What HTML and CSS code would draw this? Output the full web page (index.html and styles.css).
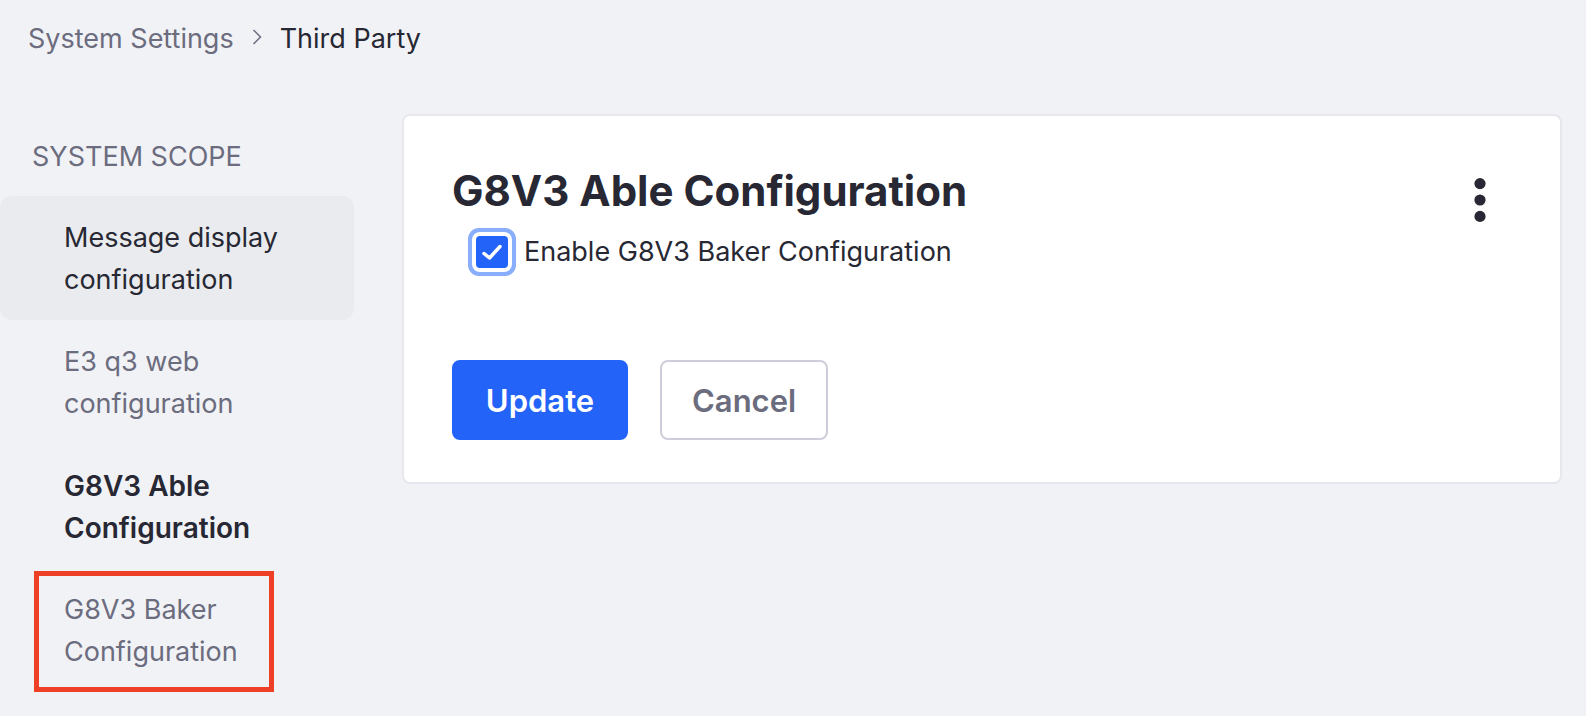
FILE: index.html
```html
<!DOCTYPE html>
<html lang="en">
<head>
<meta charset="utf-8">
<meta name="viewport" content="width=device-width, initial-scale=1">
<title>Third Party - System Settings</title>
<link rel="stylesheet" href="styles.css">
</head>
<body>
<nav class="breadcrumb" aria-label="Breadcrumb">
  <a class="breadcrumb-link" href="#">System Settings</a>
  <svg class="breadcrumb-divider" viewBox="0 0 10 16" aria-hidden="true"><path d="M1.500 1 8.500 8l-7 7"/></svg>
  <span class="breadcrumb-current" aria-current="page">Third Party</span>
</nav>
<div class="layout">
  <nav class="sidebar" aria-labelledby="scope">
    <h2 class="sidebar-title" id="scope">SYSTEM SCOPE</h2>
    <ul class="menu">
      <li><a class="menu-link is-hovered" href="#">Message display configuration</a></li>
      <li><a class="menu-link" href="#">E3 q3 web configuration</a></li>
      <li><a class="menu-link is-active" href="#">G8V3 Able Configuration</a></li>
      <li><a class="menu-link is-marked" href="#">G8V3 Baker Configuration</a></li>
    </ul>
  </nav>
  <main class="main">
    <form class="card">
      <header class="card-header">
        <h1 class="card-title">G8V3 Able Configuration</h1>
        <button class="actions" type="button" aria-label="Actions">
          <svg class="actions-icon" viewBox="0 0 12 44" aria-hidden="true"><circle cx="6" cy="5.600" r="5.600"/><circle cx="6" cy="22" r="5.600"/><circle cx="6" cy="38.400" r="5.600"/></svg>
        </button>
      </header>
      <div class="field">
        <span class="check">
          <input class="check-input" type="checkbox" id="enable" checked>
          <svg class="check-icon" viewBox="0 0 32 32" aria-hidden="true"><path d="M8 17.500 13.500 22 24 10.500"/></svg>
        </span>
        <label class="field-label" for="enable">Enable G8V3 Baker Configuration</label>
      </div>
      <div class="buttons">
        <button class="button button-primary" type="button">Update</button>
        <button class="button button-secondary" type="button">Cancel</button>
      </div>
    </form>
  </main>
</div>
</body>
</html>
```
FILE: styles.css
```css
* {
  box-sizing: border-box;
}

body {
  margin: 0;
  background: #f1f2f6;
  color: #272833;
  font: 400 27px/42px Inter, "Liberation Sans", sans-serif;
}

.breadcrumb {
  display: flex;
  align-items: center;
  gap: 18px;
  padding: 18px 28px 0;
}

.breadcrumb-link {
  color: #6b6c7e;
  text-decoration: none;
}

.breadcrumb-divider {
  width: 10px;
  height: 16px;
  margin-bottom: 4px;
  fill: none;
  stroke: #6b6c7e;
  stroke-width: 1.5;
}

.layout {
  display: flex;
  align-items: flex-start;
  gap: 48px;
  padding: 54px 24px 0 0;
}

.sidebar {
  flex: 0 0 354px;
  padding-top: 22px;
}

.sidebar-title {
  margin: 0 0 18px;
  padding-left: 32px;
  color: #6b6c7e;
  font-size: 27px;
  font-weight: 400;
}

.menu {
  margin: 0;
  padding: 0;
  list-style: none;
}

.menu-link {
  display: block;
  position: relative;
  padding: 21px 64px 19px;
  border-radius: 12px;
  color: #6b6c7e;
  text-decoration: none;
}

.is-hovered {
  background: #e9ebee;
  color: #272833;
}

.is-active {
  color: #272833;
  font-size: 28px;
  font-weight: 600;
}

.is-marked::after {
  content: "";
  position: absolute;
  inset: 3px 80px 0 34px;
  border: 5px solid #ee4026;
}

.main {
  flex: 1;
  min-width: 0;
}

.card {
  padding: 48px 48px 42px;
  border: 2px solid #e7e7ed;
  border-radius: 8px;
  background: #fff;
}

.card-header {
  display: flex;
  align-items: flex-start;
  justify-content: space-between;
  margin-bottom: 9px;
}

.card-title {
  margin: 0;
  font-size: 42px;
  font-weight: 700;
  line-height: 54px;
}

.actions {
  display: flex;
  margin: 14px 26px 0 0;
  padding: 0;
  border: 0;
  background: none;
}

.actions-icon {
  width: 12px;
  height: 44px;
  fill: #272833;
}

.field {
  display: flex;
  align-items: center;
  gap: 16px;
  padding-left: 24px;
}

.check {
  display: grid;
  width: 32px;
  height: 32px;
}

.check-input,
.check-icon {
  grid-area: 1 / 1;
  width: 32px;
  height: 32px;
}

.check-input {
  margin: 0;
  border-radius: 4px;
  background: #2463f8;
  box-shadow: 0 0 0 4px #fff, 0 0 0 8px #88aefc;
  appearance: none;
}

.check-icon {
  fill: none;
  stroke: #fff;
  stroke-width: 3.5;
  stroke-linecap: round;
  stroke-linejoin: round;
  pointer-events: none;
}

.buttons {
  display: flex;
  gap: 32px;
  margin-top: 87px;
}

.button {
  padding: 15px 30px 13px;
  border: 2px solid;
  border-radius: 8px;
  font: 600 31px/48px Inter, "Liberation Sans", sans-serif;
}

.button-primary {
  min-width: 176px;
  border-color: #2463f8;
  background: #2463f8;
  color: #fff;
}

.button-secondary {
  border-color: #cdced9;
  background: #fff;
  color: #6b6c7e;
}
```
